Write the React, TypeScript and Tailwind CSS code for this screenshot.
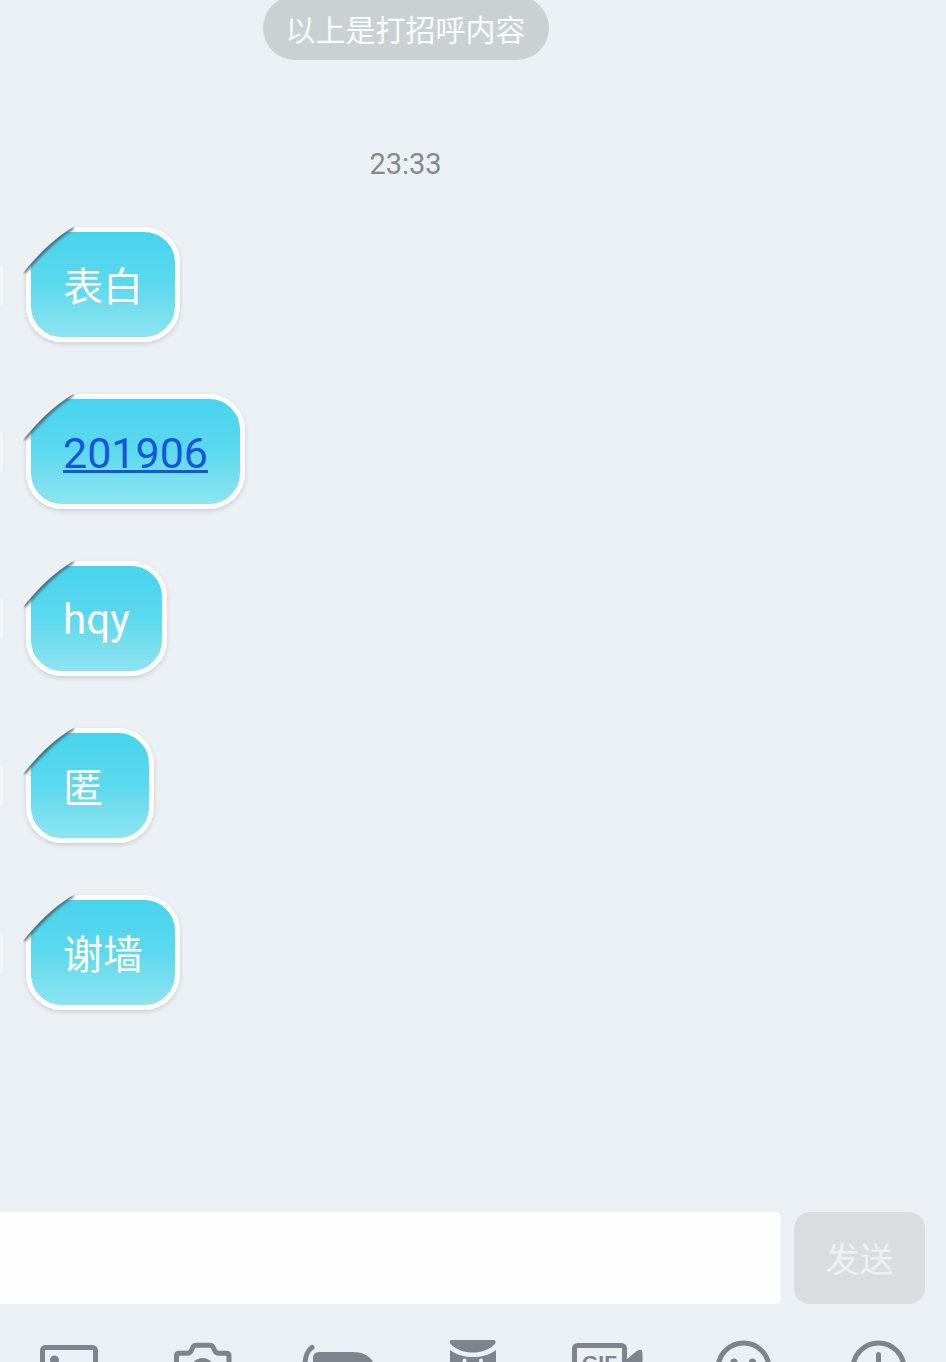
import React from "react";

type Message = { text: string; kind: "cjk" | "latin" | "link" };

const messages: Message[] = [
  { text: "表白", kind: "cjk" },
  { text: "201906", kind: "link" },
  { text: "hqy", kind: "latin" },
  { text: "匿", kind: "cjk" },
  { text: "谢墙", kind: "cjk" },
];

/* The page colour covers the bubble's corner, and a soft shade runs along the fold. */
function FoldedCorner({ id }: { id: string }) {
  return (
    <svg
      className="absolute -left-[13px] -top-[13px]"
      width="72"
      height="72"
      viewBox="-8 -8 72 72"
      aria-hidden="true"
    >
      <defs>
        <filter id={`${id}-soft`} x="-30%" y="-30%" width="160%" height="160%">
          <feGaussianBlur stdDeviation="1.8" />
        </filter>
        <clipPath id={`${id}-inside`}>
          <path d="M-3 46C9 31 26 12 49 -1L64 -1V64H-3Z" />
        </clipPath>
      </defs>
      <path d="M-5 46L-2 46C10 31 26 13 49 0L49 -4H-5Z" fill="#ebf0f4" />
      <g clipPath={`url(#${id}-inside)`}>
        <path
          d="M-2 45C10 31 26 13 47 0"
          fill="none"
          stroke="#3c4f55"
          strokeOpacity="0.85"
          strokeWidth="4"
          filter={`url(#${id}-soft)`}
        />
      </g>
    </svg>
  );
}

function Bubble({ message, id }: { message: Message; id: string }) {
  return (
    <li className="flex items-center gap-[23px]">
      <span className="h-10 w-[3px] shrink-0 rounded-r bg-[#f3f6f8]" />
      <div className="relative flex h-[115px] min-w-[128px] items-center rounded-[36px] border-[5px] border-white bg-linear-to-b from-[#47d3ee] via-[#5bd9ed] to-[#8de4f0] px-8 shadow-[0_2px_4px_rgba(90,70,70,0.2)]">
        <FoldedCorner id={id} />
        {message.kind === "link" && (
          <a
            href="#201906"
            className="relative pt-[3px] text-[43px] leading-[50px] text-[#1556db] underline decoration-[3px] underline-offset-[2px]"
          >
            {message.text}
          </a>
        )}
        {message.kind === "latin" && (
          <p className="relative pt-[3px] text-[42px] leading-[50px] text-white">{message.text}</p>
        )}
        {message.kind === "cjk" && (
          <p className="relative pt-[6px] text-[40px] leading-[50px] text-white">{message.text}</p>
        )}
      </div>
    </li>
  );
}

function Tool({ label, children }: { label: string; children: React.ReactNode }) {
  return (
    <button type="button" aria-label={label} className="size-[60px] shrink-0">
      <svg
        className="overflow-visible"
        width="60"
        height="60"
        viewBox="0 0 60 60"
        fill="none"
        stroke="#7f838b"
        strokeWidth="5"
        strokeLinecap="round"
        strokeLinejoin="round"
        aria-hidden="true"
      >
        {children}
      </svg>
    </button>
  );
}

export default function App() {
  return (
    <div className="flex h-screen flex-col overflow-hidden bg-[#ebf0f4] font-['Roboto','Noto_Sans_CJK_SC',sans-serif]">
      <main className="min-h-0 flex-1 overflow-hidden">
        <div className="flex flex-col items-center pr-[135px]">
          <p className="-mt-1 flex h-16 items-center rounded-full bg-[#cbd1d3] px-[23px] pt-[5px] text-[30px] leading-9 text-[#f7fcfe]">
            以上是打招呼内容
          </p>
          <time className="mt-[86px] text-[29px] leading-9 text-[#85898c]">23:33</time>
        </div>
        <ul className="mt-[45px] flex flex-col gap-[52px]">
          {messages.map((message, i) => (
            <Bubble key={message.text} message={message} id={`bubble-${i}`} />
          ))}
        </ul>
      </main>

      <form className="flex gap-[13px] pr-[21px]" onSubmit={(e) => e.preventDefault()}>
        <input
          type="text"
          aria-label="消息"
          className="h-[92px] min-w-0 flex-1 rounded-r-md bg-[#fefefe] px-6 text-[36px] text-gray-800 outline-none"
        />
        <button
          type="submit"
          className="h-[92px] w-[131px] shrink-0 rounded-2xl bg-[#d9dde0] pt-[4px] text-[34px] text-[#edf1f4]"
        >
          发送
        </button>
      </form>

      <nav className="flex h-[58px] shrink-0 justify-between overflow-hidden px-[38px] pt-[34px]">
        <Tool label="图片">
          <rect x="4.5" y="9.5" width="53" height="45" rx="3" />
          <circle cx="16.5" cy="22" r="4.5" fill="#7f838b" stroke="none" />
          <path d="M6 50L22 36L32 44L44 30L57 44" />
        </Tool>
        <Tool label="拍照">
          <path d="M3.5 53V17.5Q3.5 15.3 6 15.3H14Q17 15.3 18 13L20 9Q21 7.2 23 7.2H37Q39 7.2 40 9L42 13Q43 15.3 46 15.3H53.5Q56 15.3 56 17.5V53Z" />
          <circle cx="29.5" cy="32" r="9.5" />
        </Tool>
        <Tool label="红包">
          <path d="M4 9.5C0 12 -3 17 -3 28V44" />
          <path
            d="M5 58V20Q5 14 11 14H44C54 14 61 17 65 24V58Z"
            fill="#7f838b"
            stroke="none"
          />
        </Tool>
        <Tool label="戳一戳">
          <path
            d="M9 2H50Q54 2 52 6C46 12 38 14.5 30 14.5S13 12 7.5 6Q5.5 2 9 2Z"
            fill="#7f838b"
            stroke="none"
          />
          <path
            d="M7 12C15 17.500 22 19 30 19S45 17.500 53 12V60H7Z"
            fill="#7f838b"
            stroke="none"
          />
          <circle cx="21.5" cy="22.5" r="2" fill="#ebf0f4" stroke="none" />
          <circle cx="38" cy="22.5" r="2" fill="#ebf0f4" stroke="none" />
        </Tool>
        <Tool label="动图">
          <rect x="-3.5" y="7.5" width="50" height="45" rx="3" />
          <path
            d="M48 22L58 13.5Q64.5 9 64.5 16V46L48 38Z"
            fill="#7f838b"
            stroke="none"
          />
          <text
            x="4"
            y="32"
            fill="#7f838b"
            stroke="none"
            fontFamily="Liberation Sans, sans-serif"
            fontWeight="700"
            fontSize="21"
          >
            GIF
          </text>
        </Tool>
        <Tool label="表情">
          <circle cx="30.5" cy="30.5" r="25.5" />
          <circle cx="21" cy="24" r="3.5" fill="#7f838b" stroke="none" />
          <circle cx="39.5" cy="24" r="3.5" fill="#7f838b" stroke="none" />
          <path d="M19 38Q30.5 48 42 38" />
        </Tool>
        <Tool label="更多">
          <circle cx="30.5" cy="30.5" r="25.5" />
          <path d="M30.5 16.5V45M16 30.5H45" />
        </Tool>
      </nav>
    </div>
  );
}
